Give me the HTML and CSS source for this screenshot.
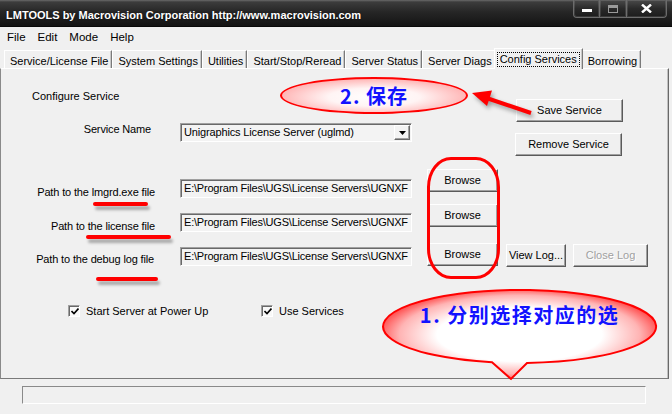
FILE: index.html
```html
<!DOCTYPE html>
<html>
<head>
<meta charset="utf-8">
<link rel="stylesheet" href="styles.css">
</head>
<body>
<div class="window">
  <div class="titlebar">
    <span class="title">LMTOOLS by Macrovision Corporation http://www.macrovision.com</span>
    <div class="wbtns">
      <div class="wbtn wmin"><svg width="10" height="4" viewBox="0 0 10 4"><rect x="0" y="0" width="10" height="3" fill="#fff"/></svg></div>
      <div class="wbtn wmax"><svg width="10" height="8" viewBox="0 0 10 8"><rect x="0.5" y="0.5" width="9" height="7" fill="none" stroke="#9a9a9a"/><rect x="1" y="1" width="8" height="2" fill="#9a9a9a"/></svg></div>
      <div class="wbtn wclose"><svg width="11" height="9" viewBox="0 0 11 9"><path d="M1 0.5 L10 8.5 M10 0.5 L1 8.5" stroke="#fff" stroke-width="2.4"/></svg></div>
    </div>
  </div>
  <div class="menubar">
    <span class="menu">File</span><span class="menu">Edit</span><span class="menu">Mode</span><span class="menu">Help</span>
  </div>
  <div class="tabs">
    <div class="tab">Service/License File</div>
    <div class="tab">System Settings</div>
    <div class="tab">Utilities</div>
    <div class="tab">Start/Stop/Reread</div>
    <div class="tab">Server Status</div>
    <div class="tab">Server Diags</div>
    <div class="tab tab-sel"><span class="focus">Config Services</span></div>
    <div class="tab">Borrowing</div>
  </div>
  <div class="panel">
    <div class="cfg-title">Configure Service</div>
    <div class="btn btn-save">Save Service</div>

    <div class="lbl lbl-svc">Service Name</div>
    <div class="combo"><span class="combo-text">Unigraphics License Server (uglmd)</span><span class="combo-arrow"><svg width="7" height="4" viewBox="0 0 7 4"><path d="M0 0 H7 L3.5 4 Z" fill="#000"/></svg></span></div>
    <div class="btn btn-remove">Remove Service</div>

    <div class="lbl lbl-r1">Path to the lmgrd.exe file</div>
    <div class="field field-r1"><span class="field-text">E:\Program Files\UGS\License Servers\UGNXF</span></div>
    <div class="btn browse browse-r1">Browse</div>

    <div class="lbl lbl-r2">Path to the license file</div>
    <div class="field field-r2"><span class="field-text">E:\Program Files\UGS\License Servers\UGNXF</span></div>
    <div class="btn browse browse-r2">Browse</div>

    <div class="lbl lbl-r3">Path to the debug log file</div>
    <div class="field field-r3"><span class="field-text">E:\Program Files\UGS\License Servers\UGNXF</span></div>
    <div class="btn browse browse-r3">Browse</div>
    <div class="btn btn-view">View Log...</div>
    <div class="btn btn-close disabled">Close Log</div>

    <div class="checks">
      <label class="check check-first"><span class="box"><svg width="8" height="7" viewBox="0 0 8 7"><path d="M0.5 3 L3 5.5 L7.5 0.5" fill="none" stroke="#000" stroke-width="1.6"/></svg></span>Start Server at Power Up</label>
      <label class="check"><span class="box"><svg width="8" height="7" viewBox="0 0 8 7"><path d="M0.5 3 L3 5.5 L7.5 0.5" fill="none" stroke="#000" stroke-width="1.6"/></svg></span>Use Services</label>
    </div>
  </div>
  <div class="statusbar"><div class="status-field"></div></div>
</div>

<!-- annotations overlaying the screenshot -->
<div class="note-oval">2. 保存</div>
<svg class="note-arrow" width="80" height="40" viewBox="460 85 80 40">
  <line x1="531" y1="113" x2="488" y2="98.5" stroke="#ff0000" stroke-width="4"/>
  <polygon points="472,93 492,90.5 487,106" fill="#ff0000"/>
</svg>
<div class="uline uline-1"></div>
<div class="uline uline-2"></div>
<div class="uline uline-3"></div>
<div class="browse-ring"></div>
<svg class="bubble" width="280" height="96" viewBox="0 0 280 96">
  <defs>
    <radialGradient id="bg1" cx="0.5" cy="0.5" r="0.55">
      <stop offset="0" stop-color="#ffffff"/>
      <stop offset="0.55" stop-color="#ffffff"/>
      <stop offset="0.8" stop-color="#ffb4b4"/>
      <stop offset="1" stop-color="#ff2a2a"/>
    </radialGradient>
  </defs>
  <path d="M 112 75.25 A 136.5 36.5 0 1 1 147 75.95 L 131 92 Z" fill="url(#bg1)" stroke="#ff0000" stroke-width="2"/>
</svg>
<div class="bubble-text">1. 分别选择对应的选</div>
</body>
</html>
```

FILE: styles.css
```css
html, body {
  margin: 0;
  padding: 0;
}
body {
  width: 672px;
  height: 414px;
  overflow: hidden;
  background: #f0f0f0;
  font-family: "Liberation Sans", Arial, sans-serif;
  font-size: 11px;
  color: #000;
  position: relative;
}
.window {
  width: 672px;
  height: 414px;
}

/* title bar */
.titlebar {
  height: 27px;
  display: flex;
  align-items: flex-start;
  background: linear-gradient(#6a6a6a 0, #3c3c3c 2px, #262626 12px, #141414 26px);
  border-bottom: 1px solid #0a0a0a;
  box-sizing: border-box;
}
.title {
  color: #fff;
  font-weight: bold;
  font-size: 11px;
  line-height: 14px;
  padding: 8px 0 0 6px;
  white-space: nowrap;
  text-shadow: 0 0 2px rgba(0,0,0,0.6);
}
.wbtns {
  margin-left: auto;
  margin-right: 5px;
  display: flex;
}
.wbtn {
  height: 18px;
  box-sizing: border-box;
  border: 1px solid #6c6c6c;
  border-top: none;
  background: linear-gradient(#4a4a4a, #2a2a2a 50%, #1c1c1c);
  box-shadow: inset 0 0 0 1px rgba(255,255,255,0.12);
  display: flex;
  align-items: center;
  justify-content: center;
}
.wmin { width: 27px; border-bottom-left-radius: 4px; padding-top: 5px; }
.wmax { width: 27px; border-left: none; }
.wclose { width: 40px; border-left: none; border-bottom-right-radius: 4px; }

/* menu */
.menubar {
  height: 19px;
  display: flex;
  align-items: center;
  padding-left: 1px;
  background: #f0f0f0;
}
.menu {
  padding: 0 6px;
  font-size: 11.5px;
  line-height: 14px;
  padding-top: 1px;
}

/* tabs */
.tabs {
  height: 22px;
  display: flex;
  align-items: flex-end;
  padding-left: 4px;
  box-sizing: border-box;
}
.tab {
  height: 18px;
  box-sizing: border-box;
  padding: 2px 3px 0 5px;
  line-height: 16px;
  border-left: 1px solid #ffffff;
  border-top: 1px solid #ffffff;
  border-right: 1px solid #7a7a7a;
  box-shadow: inset -1px 0 0 #c8c8c8;
  white-space: nowrap;
  font-size: 11px;
}
.tab-sel {
  height: 21px;
  margin: 0 -1px 0 -2px;
  padding: 2px 2px 0 2px;
  position: relative;
  z-index: 1;
  background: #f0f0f0;
  margin-bottom: -1px;
}
.focus {
  display: inline-block;
  border: 1px dotted #000;
  padding: 0 2px;
  line-height: 13px;
}

/* panel */
.panel {
  width: 669px;
  height: 311px;
  box-sizing: border-box;
  border-top: 1px solid #ffffff;
  border-left: 1px solid #8a8a8a;
  border-right: 1px solid #696969;
  border-bottom: 1px solid #7a7a7a;
  box-shadow: inset -1px 0 0 #c0c0c0;
  padding-left: 1px;
  display: grid;
  grid-template-columns: 154px 24px 232px 15px 71px 8px 60px 7px 75px 1fr;
  grid-template-rows: 53px 35px 44px 34px 35px 1fr;
  align-items: start;
}
.cfg-title {
  grid-column: 1 / 4;
  grid-row: 1;
  margin: 20px 0 0 30px;
  line-height: 14px;
}
.lbl {
  grid-column: 1;
  text-align: right;
  line-height: 14px;
  white-space: nowrap;
  padding-right: 1px;
  letter-spacing: -0.15px;
}
.lbl-svc { grid-row: 2; margin-top: 0; padding-right: 5px; }
.lbl-r1 { grid-row: 3; margin-top: 28px; }
.lbl-r2 { grid-row: 4; margin-top: 18px; }
.lbl-r3 { grid-row: 5; margin-top: 17px; padding-right: 2px; }

.field, .combo {
  grid-column: 3;
  box-sizing: border-box;
  height: 19px;
  border: 1px solid;
  border-color: #a0a0a0 #ffffff #ffffff #a0a0a0;
  box-shadow: inset 1px 1px 0 #696969;
  background: #f3f3f3;
  padding: 0 1px 0 3px;
  line-height: 17px;
  overflow: hidden;
  white-space: nowrap;
}
.field-text {
  letter-spacing: -0.2px;
}
.combo {
  grid-row: 2;
  margin-top: 1px;
  height: 19px;
  display: flex;
  padding-right: 1px;
}
.combo-text { flex: 1; overflow: hidden; letter-spacing: -0.15px; }
.combo-arrow {
  width: 16px;
  height: 15px;
  margin-top: 1px;
  box-sizing: border-box;
  border: 1px solid;
  border-color: #ffffff #696969 #696969 #ffffff;
  box-shadow: inset -1px -1px 0 #a0a0a0;
  display: flex;
  align-items: center;
  justify-content: center;
}
.field-r1 { grid-row: 3; margin-top: 22px; }
.field-r2 { grid-row: 4; margin-top: 12px; }
.field-r3 { grid-row: 5; margin-top: 12px; }

.btn {
  box-sizing: border-box;
  height: 23px;
  border: 1px solid;
  border-color: #ffffff #5a5a5a #5a5a5a #ffffff;
  box-shadow: inset -1px -1px 0 #a0a0a0;
  background: #f0f0f0;
  text-align: center;
  line-height: 21px;
  white-space: nowrap;
}
.btn-save {
  grid-column: 7 / 10;
  grid-row: 1;
  margin: 30px 0 0 10px;
  width: 107px;
}
.btn-remove {
  grid-column: 7 / 10;
  grid-row: 2;
  margin: 11px 0 0 9px;
  width: 107px;
}
.browse { grid-column: 5; }
.browse-r1 { grid-row: 3; margin-top: 12px; }
.browse-r2 { grid-row: 4; margin-top: 3px; }
.browse-r3 { grid-row: 5; margin-top: 8px; }
.btn-view { grid-column: 7; grid-row: 5; margin-top: 9px; }
.btn-close { grid-column: 9; grid-row: 5; margin-top: 9px; }
.disabled {
  color: #a0a0a0;
  text-shadow: 1px 1px 0 #ffffff;
}

.checks {
  grid-column: 1 / -1;
  grid-row: 6;
  margin-top: 34px;
  padding-left: 66px;
  display: flex;
  line-height: 14px;
}
.check {
  display: flex;
  align-items: center;
}
.check-first { width: 193px; }
.box {
  width: 12px;
  height: 12px;
  box-sizing: border-box;
  border: 1px solid;
  border-color: #a0a0a0 #ffffff #ffffff #a0a0a0;
  box-shadow: inset 1px 1px 0 #696969;
  background: #f8f8f8;
  margin-right: 6px;
  display: flex;
  align-items: center;
  justify-content: center;
  padding: 1px 0 0 1px;
}

.statusbar {
  padding: 7px 0 0 22px;
}
.status-field {
  width: 624px;
  height: 18px;
  box-sizing: border-box;
  border: 1px solid;
  border-color: #8a8a8a #ffffff #ffffff #8a8a8a;
}

/* annotations */
.note-oval {
  position: absolute;
  left: 280px;
  top: 77px;
  width: 188px;
  height: 37px;
  box-sizing: border-box;
  border: 2px solid #ff0000;
  border-radius: 50%;
  background: radial-gradient(ellipse at 50% 55%, #ffffff 0%, #fff4f4 35%, #ffb0b0 75%, #ff3030 100%);
  color: #1212ff;
  font-family: "Noto Sans CJK SC", sans-serif;
  font-weight: 700;
  font-size: 20px;
  line-height: 33px;
  text-align: center;
  letter-spacing: 1px;
}
.note-arrow {
  position: absolute;
  left: 460px;
  top: 85px;
  filter: drop-shadow(2px 3px 2px rgba(0,0,0,0.35));
}
.uline {
  position: absolute;
  height: 4px;
  background: #ff0000;
  border-radius: 2px;
  box-shadow: 2px 4px 3px rgba(0,0,0,0.3);
}
.uline-1 { left: 93px; top: 202px; width: 55px; }
.uline-2 { left: 86px; top: 235px; width: 85px; }
.uline-3 { left: 96px; top: 277px; width: 62px; }
.browse-ring {
  position: absolute;
  left: 427px;
  top: 157px;
  width: 73px;
  height: 122px;
  box-sizing: border-box;
  border: 3px solid #ff0000;
  border-radius: 24px / 30px;
}
.bubble {
  position: absolute;
  left: 380px;
  top: 287px;
}
.bubble-text {
  position: absolute;
  left: 383px;
  top: 302px;
  width: 273px;
  text-align: center;
  color: #1212ff;
  font-family: "Noto Sans CJK SC", sans-serif;
  font-weight: 700;
  font-size: 20px;
  line-height: 26px;
  letter-spacing: 1.5px;
  white-space: nowrap;
}
```
